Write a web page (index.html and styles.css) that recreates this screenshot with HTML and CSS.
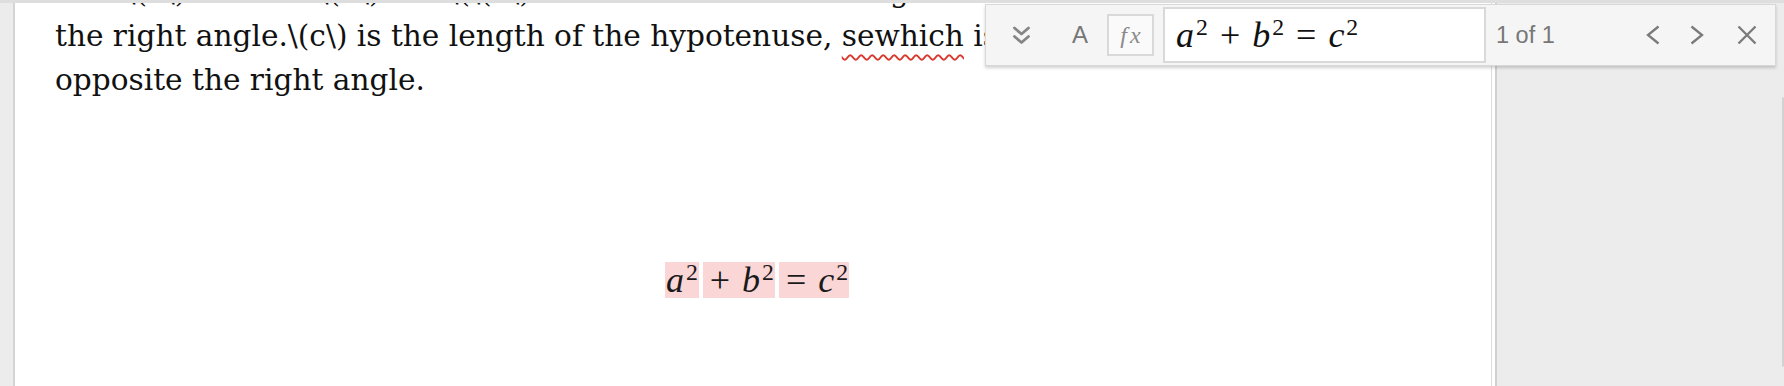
FILE: index.html
```html
<!DOCTYPE html>
<html>
<head>
<meta charset="utf-8">
<link rel="stylesheet" href="styles.css">
</head>
<body>
<div class="app">
  <div class="left-strip"></div>
  <div class="page">
    <div class="doc">
      <p class="line">side \(a\) and the \(b\) are \(\(a\) of the two sides meeting at</p>
      <p class="line">the right angle.\(c\) is the length of the hypotenuse, <span class="misspelt">sewhich</span> is the side</p>
      <p class="line">opposite the right angle.</p>
      <div class="display">
        <span class="hl"><i>a</i><sup>2</sup></span><span class="hl"><span class="op">+</span><i>b</i><sup>2</sup></span><span class="hl"><span class="op">=</span><i>c</i><sup>2</sup></span>
      </div>
    </div>
  </div>
  <div class="side">
    <div class="scroll-edge"></div>
  </div>

  <div class="findbar">
    <button class="icon-btn" aria-label="More options">
      <svg width="19" height="21" viewBox="0 0 19 21"><path d="M2.5 3 L9.5 9 L16.5 3 M2.5 11.5 L9.5 17.5 L16.5 11.5" fill="none" stroke="#858585" stroke-width="2.8" stroke-linecap="round" stroke-linejoin="round"/></svg>
    </button>
    <span class="case">A</span>
    <span class="fx"><i>f</i><i>x</i></span>
    <div class="query"><span class="qmath"><i>a</i><sup>2</sup><span class="op">+</span><i>b</i><sup>2</sup><span class="op">=</span><i>c</i><sup>2</sup></span></div>
    <span class="count">1 of 1</span>
    <div class="nav">
      <svg class="prev" width="14" height="20" viewBox="0 0 14 20"><path d="M12.5 1.5 L2 10 L12.5 18.5" fill="none" stroke="#7a7a7a" stroke-width="2.3"/></svg>
      <svg class="next" width="14" height="20" viewBox="0 0 14 20"><path d="M1.5 1.5 L12 10 L1.5 18.5" fill="none" stroke="#7a7a7a" stroke-width="2.3"/></svg>
      <svg class="close" width="20" height="20" viewBox="0 0 20 20"><path d="M1.5 1.5 L18.5 18.5 M18.5 1.5 L1.5 18.5" fill="none" stroke="#7a7a7a" stroke-width="2.3"/></svg>
    </div>
  </div>
</div>
</body>
</html>
```

FILE: styles.css
```css
html, body {
  margin: 0;
  padding: 0;
  background: #ececec;
  overflow: hidden;
}
.app {
  position: relative;
  display: flex;
  height: 386px;
  border-top: 3px solid #dedede;
  box-sizing: border-box;
}
.left-strip {
  width: 13px;
  flex: none;
  background: #ececec;
}
.page {
  width: 1479px;
  flex: none;
  background: #fff;
  border-left: 2px solid #d4d4d4;
  border-right: 1px solid #dcdcdc;
  box-sizing: border-box;
  overflow: hidden;
}
.doc {
  padding: 0 40px;
  margin-top: -33px;
  font-family: "DejaVu Serif", serif;
  font-size: 29.6px;
  color: #111;
}
.line {
  margin: 0;
  height: 44px;
  line-height: 44px;
  white-space: nowrap;
}
.misspelt {
  text-decoration: underline wavy #d9382c;
  text-decoration-thickness: 1.8px;
  text-underline-offset: 8px;
}
.display {
  margin-top: 160px;
  padding-left: 8px;
  height: 36px;
  line-height: 36px;
  text-align: center;
  font-family: "Liberation Serif", serif;
  font-size: 36px;
  color: #1a1a1a;
}
.hl {
  display: inline-block;
  height: 36px;
  line-height: 36px;
  background: #fbd6d6;
  margin: 0 2px;
  padding: 0 1px;
  vertical-align: top;
}
.op {
  font-style: normal;
  margin: 0 12px;
}
.hl .op:first-child {
  margin-left: 6px;
}
sup {
  font-size: 0.66em;
  vertical-align: 0.5em;
  line-height: 0;
  font-style: normal;
  margin-left: 2px;
}
.side {
  flex: 1;
  position: relative;
  border-left: 3px solid #fff;
  box-sizing: border-box;
}
.side::before {
  content: "";
  position: absolute;
  left: 0;
  top: 0;
  bottom: 0;
  width: 2px;
  background: #d0d0d0;
}
.scroll-edge {
  position: absolute;
  right: 0;
  top: 94px;
  height: 270px;
  width: 2px;
  border-radius: 2px 0 0 2px;
  background: #d2d2d2;
}
.findbar {
  position: absolute;
  left: 985px;
  top: 1px;
  width: 791px;
  height: 62px;
  box-sizing: border-box;
  background: #f5f5f5;
  border: 1px solid #d8d8d8;
  box-shadow: 0 2px 3px rgba(0,0,0,0.18);
  display: flex;
  align-items: center;
  padding: 0 6px 0 26px;
  font-family: "Liberation Sans", Arial, sans-serif;
  color: #7a7a7a;
}
.icon-btn {
  border: 0;
  background: none;
  padding: 0;
  display: flex;
  width: 20px;
}
.case {
  margin-left: 40px;
  font-size: 24px;
  width: 21px;
  color: #777;
}
.fx {
  margin-left: 14px;
  width: 47px;
  height: 42px;
  box-sizing: border-box;
  border: 2px solid #d9d9d9;
  background: #fafafa;
  display: flex;
  align-items: center;
  justify-content: center;
  font-family: "Liberation Serif", serif;
  font-size: 24px;
  color: #8a8a8a;
  gap: 3px;
}
.query {
  margin-left: 9px;
  width: 323px;
  height: 56px;
  box-sizing: border-box;
  border: 2px solid #d9d9d9;
  background: #fff;
  display: flex;
  align-items: center;
  padding-left: 11px;
  font-family: "Liberation Serif", serif;
  font-size: 36px;
  color: #111;
}
.qmath {
  white-space: nowrap;
  line-height: 40px;
}
.count {
  margin-left: 10px;
  font-size: 23.5px;
  color: #777;
  width: 150px;
}
.nav {
  display: flex;
  align-items: center;
}
.nav .next {
  margin-left: 30px;
}
.nav .close {
  margin-left: 33px;
}
```
